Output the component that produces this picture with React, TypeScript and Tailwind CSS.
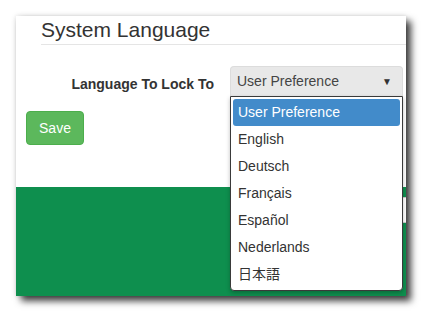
import React from "react";

const languages = [
  "User Preference",
  "English",
  "Deutsch",
  "Français",
  "Español",
  "Nederlands",
  "日本語",
];

function LanguageMenu() {
  return (
    <div className="absolute left-[214px] top-[80px] w-[173px] rounded-b-[4px] border border-[#3a3a3a] bg-white p-[2px] shadow-[0_2px_4px_rgba(0,0,0,0.25)]">
      {languages.map((lang, i) => (
        <div
          key={lang}
          className={
            i === 0
              ? "flex h-[27px] items-center rounded-[3px] bg-[#428bca] px-[5px] text-[14px] text-white"
              : "flex h-[27px] items-center px-[5px] text-[14px] text-[#333]"
          }
        >
          {lang}
        </div>
      ))}
    </div>
  );
}

export default function App() {
  return (
    <div
      className="h-[313px] w-[423px] bg-white pl-[16px] pt-[16px]"
      style={{ fontFamily: '"Liberation Sans", Arial, "Noto Sans CJK JP", sans-serif' }}
    >
      <div className="relative h-[280px] w-[390px] overflow-hidden bg-white shadow-[5px_5px_7px_rgba(0,0,0,0.75),0_0_5px_rgba(0,0,0,0.15)]">
        <div className="h-[171px]">
          <h2 className="ml-[25px] border-b border-[#e5e5e5] pb-[3px] pt-[2px] text-[21px] leading-[23px] text-[#333]">
            System Language
          </h2>

          <div className="mt-[21px] flex h-[30px] items-center">
            <label className="w-[214px] pr-[16px] pt-[6px] text-right text-[14px] font-bold text-[#333]">
              Language To Lock To
            </label>
            <div className="flex h-[30px] w-[173px] items-center justify-between rounded-t-[4px] border border-b-0 border-[#dcdcdc] bg-[#e8e8e8] pl-[6px] pr-[10px] text-[14px] text-[#444]">
              <span>User Preference</span>
              <span className="text-[10px] text-[#333]">▼</span>
            </div>
          </div>

          <button className="ml-[10px] mt-[15px] h-[34px] w-[58px] rounded-[4px] border border-[#4cae4c] bg-[#5cb85c] text-[14px] text-white">
            Save
          </button>
        </div>

        <div className="flex h-[109px] justify-end bg-[#0e8f4e] pt-[10px]">
          <div className="-mr-[20px] h-[26px] w-[120px] border border-[#ccc] bg-white px-[6px] text-[14px] leading-[24px] text-[#e08a2c]">
            p
          </div>
        </div>

        <LanguageMenu />
      </div>
    </div>
  );
}
